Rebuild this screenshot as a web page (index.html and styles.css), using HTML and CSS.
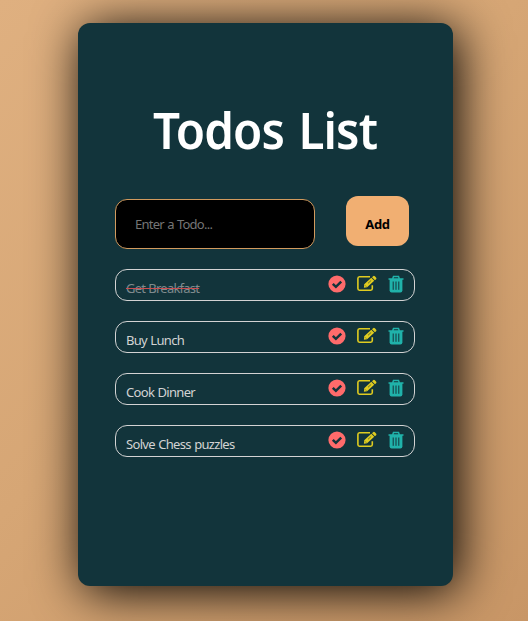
FILE: index.html
```html
<!DOCTYPE html>
<html lang="en">
<head>
<meta charset="utf-8">
<title>Todos List</title>
<link rel="stylesheet" href="styles.css">
</head>
<body>
<svg class="sprite" aria-hidden="true">
  <symbol id="check" viewBox="0 0 18 18">
    <circle cx="9" cy="9" r="8.6" fill="#ff6b6b"/>
    <path d="M4.8 8.8 7.9 11.8 13.2 6.6" fill="none" stroke="#12343b" stroke-width="2.5"/>
  </symbol>
  <symbol id="edit" viewBox="0 0 20 18">
    <path d="M13 1.8H2.5A1.7 1.7 0 0 0 .9 3.5V13.5A1.7 1.7 0 0 0 2.5 15.2H13.7A1.7 1.7 0 0 0 15.3 13.5V10.3" fill="none" stroke="#e0cc20" stroke-width="1.6"/>
    <path d="M7.2 9.3 14.3 2.8 17.2 5.7 10.1 12.3 6.9 12.8ZM15 2.2 16.1 1.2Q17 .5 17.9 1.3L19.2 2.7Q19.8 3.5 19.1 4.2L17.9 5.2Z" fill="#e0cc20"/>
    <path d="M8.2 10.5 9.2 11.5M11 8.3 14.2 5.4" fill="none" stroke="#12343b" stroke-width=".6"/>
  </symbol>
  <symbol id="trash" viewBox="0 0 16 18">
    <path d="M4.8 3.6 5.5 1.5H10.5L11.2 3.6M.5 4.1H15.5" fill="none" stroke="#20b2aa" stroke-width="1.5"/>
    <path d="M1.6 4H14.4V15.6Q14.2 17.5 12.4 17.5H3.6Q1.8 17.5 1.6 15.6Z" fill="#20b2aa"/>
    <path d="M5.2 6.5V14.8M8 6.5V14.8M10.8 6.5V14.8" stroke="#12343b" stroke-width="1"/>
  </symbol>
</svg>
<main class="card">
  <h1 class="title">Todos List</h1>
  <form class="entry">
    <input class="field" type="text" placeholder="Enter a Todo..." aria-label="Todo">
    <button class="add" type="button">Add</button>
  </form>
  <ul class="list">
    <li class="item"><span class="label done">Get Breakfast</span><svg class="check"><use href="#check"/></svg><svg class="edit"><use href="#edit"/></svg><svg class="trash"><use href="#trash"/></svg></li>
    <li class="item"><span class="label">Buy Lunch</span><svg class="check"><use href="#check"/></svg><svg class="edit"><use href="#edit"/></svg><svg class="trash"><use href="#trash"/></svg></li>
    <li class="item"><span class="label">Cook Dinner</span><svg class="check"><use href="#check"/></svg><svg class="edit"><use href="#edit"/></svg><svg class="trash"><use href="#trash"/></svg></li>
    <li class="item"><span class="label">Solve Chess puzzles</span><svg class="check"><use href="#check"/></svg><svg class="edit"><use href="#edit"/></svg><svg class="trash"><use href="#trash"/></svg></li>
  </ul>
</main>
</body>
</html>
```
FILE: styles.css
```css
* { box-sizing: border-box; }
body {
  margin: 0;
  height: 621px;
  padding: 23px 75px 35px 78px;
  overflow: hidden;
  background: linear-gradient(135deg, #dfb080, #d6a675 45%, #c89666);
  font-family: "Noto Sans", sans-serif;
}
.sprite { display: none; }
.card {
  width: 375px;
  height: 563px;
  padding: 73px 38px 0 37px;
  border-radius: 12px;
  background: #12343b;
  box-shadow: 5px 5px 50px #000;
}
.title {
  margin: 0;
  height: 68px;
  font-size: 50px;
  line-height: 68px;
  font-weight: 600;
  letter-spacing: -.9px;
  word-spacing: 3px;
  text-align: center;
  white-space: nowrap;
  color: #fff;
  transform: scaleX(.95);
}
.entry { display: flex; height: 85px; padding-top: 32px; }
.field {
  width: 200px;
  height: 50px;
  margin-top: 3px;
  padding: 0 19px 1px;
  border: 1px solid #d19a5e;
  border-radius: 12px;
  background: #000;
  color: #fff;
  font: 13px "Noto Sans", sans-serif;
  letter-spacing: -.75px;
  word-spacing: .6px;
}
.field::placeholder { color: #757575; opacity: 1; }
.add {
  width: 63px;
  height: 50px;
  margin-left: 31px;
  padding: 5px 0 0;
  border: 0;
  border-radius: 12px;
  background: #f1af72;
  color: #000;
  font: 700 13px "Noto Sans", sans-serif;
  letter-spacing: -.3px;
}
.list {
  display: grid;
  gap: 20px;
  margin: 20px 0 0;
  padding: 0;
  list-style: none;
}
.item {
  display: flex;
  height: 32px;
  padding: 5px 10px 0;
  border: 1px solid #d3d3d3;
  border-radius: 12px;
}
.label {
  margin: 4px auto 0 0;
  height: 18px;
  font-size: 13px;
  line-height: 18px;
  letter-spacing: -.68px;
  word-spacing: .6px;
  white-space: nowrap;
  color: #d3d3d3;
}
.done {
  color: #808b8e;
  letter-spacing: -.78px;
  text-decoration: line-through #c94c50 1px;
}
.check { width: 18px; height: 18px; }
.edit { width: 20px; height: 18px; margin-left: 11px; }
.trash { width: 16px; height: 18px; margin-left: 11px; }
```
